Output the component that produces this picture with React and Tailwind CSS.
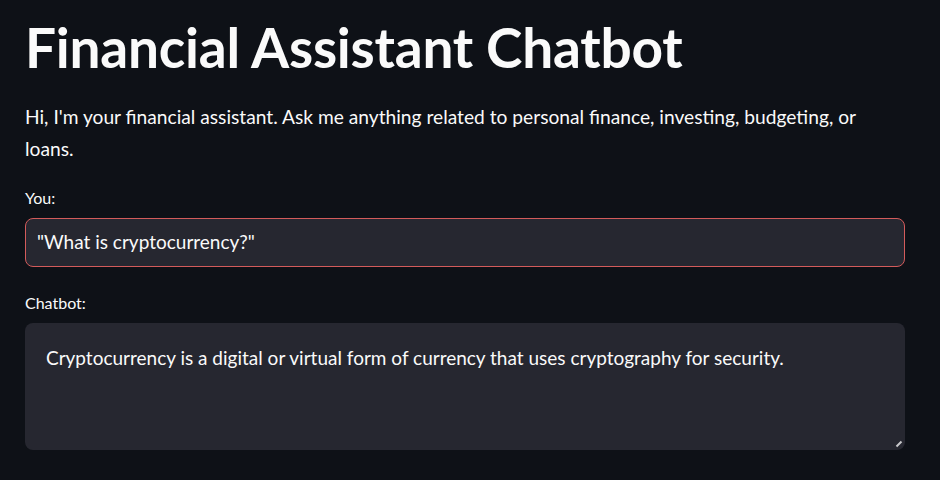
import React from "react";

function App() {
  const font = { fontFamily: '"Lato", "Open Sans", sans-serif' };

  return (
    <div className="min-h-screen w-full bg-[#0e1117] text-[#fafafa]" style={font}>
      <div className="w-[880px] ml-[25px] pt-[14px]">
        <h1 className="text-[55px] font-bold leading-[66px] tracking-[-0.25px]">
          Financial Assistant Chatbot
        </h1>

        <p className="mt-[21px] text-[19.2px] leading-[32px] pr-[20px]">
          Hi, I'm your financial assistant. Ask me anything related to personal finance, investing, budgeting, or loans.
        </p>

        <div className="mt-[22px]">
          <label className="block text-[16px] leading-[22px]">You:</label>
          <div className="mt-[9px] h-[49px] rounded-lg border border-[#d35b5b] bg-[#262730] px-[11px] flex items-center">
            <span className="text-[19px]">"What is cryptocurrency?"</span>
          </div>
        </div>

        <div className="mt-[25px]">
          <label className="block text-[16px] leading-[22px]">Chatbot:</label>
          <div className="relative mt-[9px] h-[127px] rounded-lg bg-[#262730] px-[21px] pt-[21px]">
            <span className="text-[19px]">
              Cryptocurrency is a digital or virtual form of currency that uses cryptography for security.
            </span>
            <svg className="absolute right-[2px] bottom-[2px]" width="8" height="8" viewBox="0 0 8 8">
              <line x1="1.5" y1="6.5" x2="6.5" y2="1.5" stroke="#c9c9cc" strokeWidth="2" />
            </svg>
          </div>
        </div>
      </div>
    </div>
  );
}

export default App;
